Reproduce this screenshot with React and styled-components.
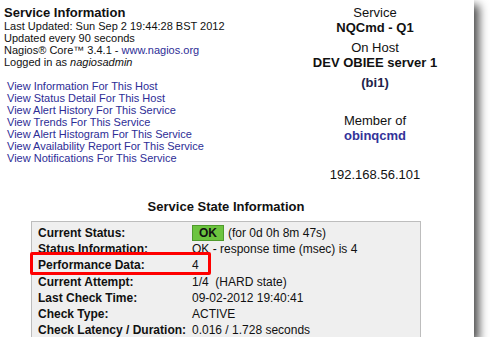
import styled, { createGlobalStyle } from "styled-components";

// ==== Page reset ====
const GlobalStyle = createGlobalStyle`
  html, body {
    margin: 0;
    padding: 0;
    background: #fff;
    overflow: hidden;
  }
  body {
    font-family: "Liberation Sans", Arial, Helvetica, sans-serif;
    color: #111;
  }
`;

// ==== Screenshot panel with its drop shadow ====
const Panel = styled.div`
  width: 474px;
  height: 337px;
  background: #fff;
  overflow: hidden;
  box-shadow: 5px 5px 9px rgba(0, 0, 0, 0.7);
  display: flex;
  flex-direction: column;
`;

const Top = styled.div`
  display: flex;
  height: 182px;
`;

const InfoColumn = styled.div`
  flex: 1;
  padding: 5px 0 0 4px;
`;

const Title = styled.div`
  font-size: 13px;
  line-height: 15px;
  font-weight: bold;
`;

const Line = styled.div`
  font-size: 11px;
  line-height: 12px;
`;

const Link = styled.a`
  color: #2d2d96;
  text-decoration: none;
`;

const LinkList = styled.div`
  margin-top: 12px;
  padding-left: 3px;
  display: flex;
  flex-direction: column;
`;

const NavLink = styled(Link)`
  font-size: 11px;
  line-height: 12px;
`;

// ==== Right hand service / host column ====
const HostColumn = styled.div`
  width: 198px;
  padding-top: 5px;
  text-align: center;
  font-size: 13px;
  line-height: 15px;
`;

const Block = styled.div`
  margin-top: ${(p) => p.$gap || 0}px;
`;

const Strong = styled.div`
  font-weight: bold;
  color: ${(p) => p.$color || "#111"};
`;

// ==== Service state section ====
const StateSection = styled.div`
  width: 390px;
  margin: 17px 0 0 31px;
`;

const SectionTitle = styled.div`
  font-size: 13px;
  line-height: 15px;
  font-weight: bold;
  text-align: center;
`;

const StateTable = styled.div`
  position: relative;
  margin-top: 7px;
  background: #efefef;
  border: 1px solid #bdbdbd;
  padding: 3px 0 6px 6px;
  font-size: 12px;
`;

const Row = styled.div`
  display: grid;
  grid-template-columns: 154px 1fr;
  height: 16.2px;
  line-height: 16.2px;
  white-space: nowrap;
`;

const Label = styled.div`
  font-weight: bold;
`;

const Value = styled.div`
  display: flex;
  align-items: center;
  gap: 4px;
`;

const StatusBadge = styled.span`
  display: inline-block;
  background: #6cc43f;
  border: 1px solid #4f9a2c;
  font-weight: bold;
  line-height: 14px;
  padding: 0 6px;
  color: #111;
`;

const Highlight = styled.div`
  position: absolute;
  left: -2px;
  top: 30px;
  width: 181px;
  height: 23px;
  box-sizing: border-box;
  border: 3px solid #f00;
  border-radius: 2px;
`;

const rows = [
  ["Current Status:", "status"],
  ["Status Information:", "OK - response time (msec) is 4"],
  ["Performance Data:", "4"],
  ["Current Attempt:", "1/4\u00a0 (HARD state)"],
  ["Last Check Time:", "09-02-2012 19:40:41"],
  ["Check Type:", "ACTIVE"],
  ["Check Latency / Duration:", "0.016 / 1.728 seconds"],
];

export default function App() {
  return (
    <>
      <GlobalStyle />
      <Panel>
        <Top>
          <InfoColumn>
            <Title>Service Information</Title>
            <Line>Last Updated: Sun Sep 2 19:44:28 BST 2012</Line>
            <Line>Updated every 90 seconds</Line>
            <Line>
              Nagios® Core™ 3.4.1 - <Link href="#">www.nagios.org</Link>
            </Line>
            <Line>
              Logged in as <i>nagiosadmin</i>
            </Line>
            <LinkList>
              <NavLink href="#">View Information For This Host</NavLink>
              <NavLink href="#">View Status Detail For This Host</NavLink>
              <NavLink href="#">View Alert History For This Service</NavLink>
              <NavLink href="#">View Trends For This Service</NavLink>
              <NavLink href="#">View Alert Histogram For This Service</NavLink>
              <NavLink href="#">View Availability Report For This Service</NavLink>
              <NavLink href="#">View Notifications For This Service</NavLink>
            </LinkList>
          </InfoColumn>
          <HostColumn>
            <Block>
              <div>Service</div>
              <Strong>NQCmd - Q1</Strong>
            </Block>
            <Block $gap={5}>
              <div>On Host</div>
              <Strong>DEV OBIEE server 1</Strong>
            </Block>
            <Block $gap={5}>
              <Strong $color="#22224a">(bi1)</Strong>
            </Block>
            <Block $gap={23}>
              <div>Member of</div>
              <Strong $color="#333399">obinqcmd</Strong>
            </Block>
            <Block $gap={24}>192.168.56.101</Block>
          </HostColumn>
        </Top>
        <StateSection>
          <SectionTitle>Service State Information</SectionTitle>
          <StateTable>
            {rows.map(([label, value]) => (
              <Row key={label}>
                <Label>{label}</Label>
                <Value>
                  {value === "status" ? (
                    <>
                      <StatusBadge>OK</StatusBadge>
                      <span>(for 0d 0h 8m 47s)</span>
                    </>
                  ) : (
                    value
                  )}
                </Value>
              </Row>
            ))}
            <Highlight />
          </StateTable>
        </StateSection>
      </Panel>
    </>
  );
}
